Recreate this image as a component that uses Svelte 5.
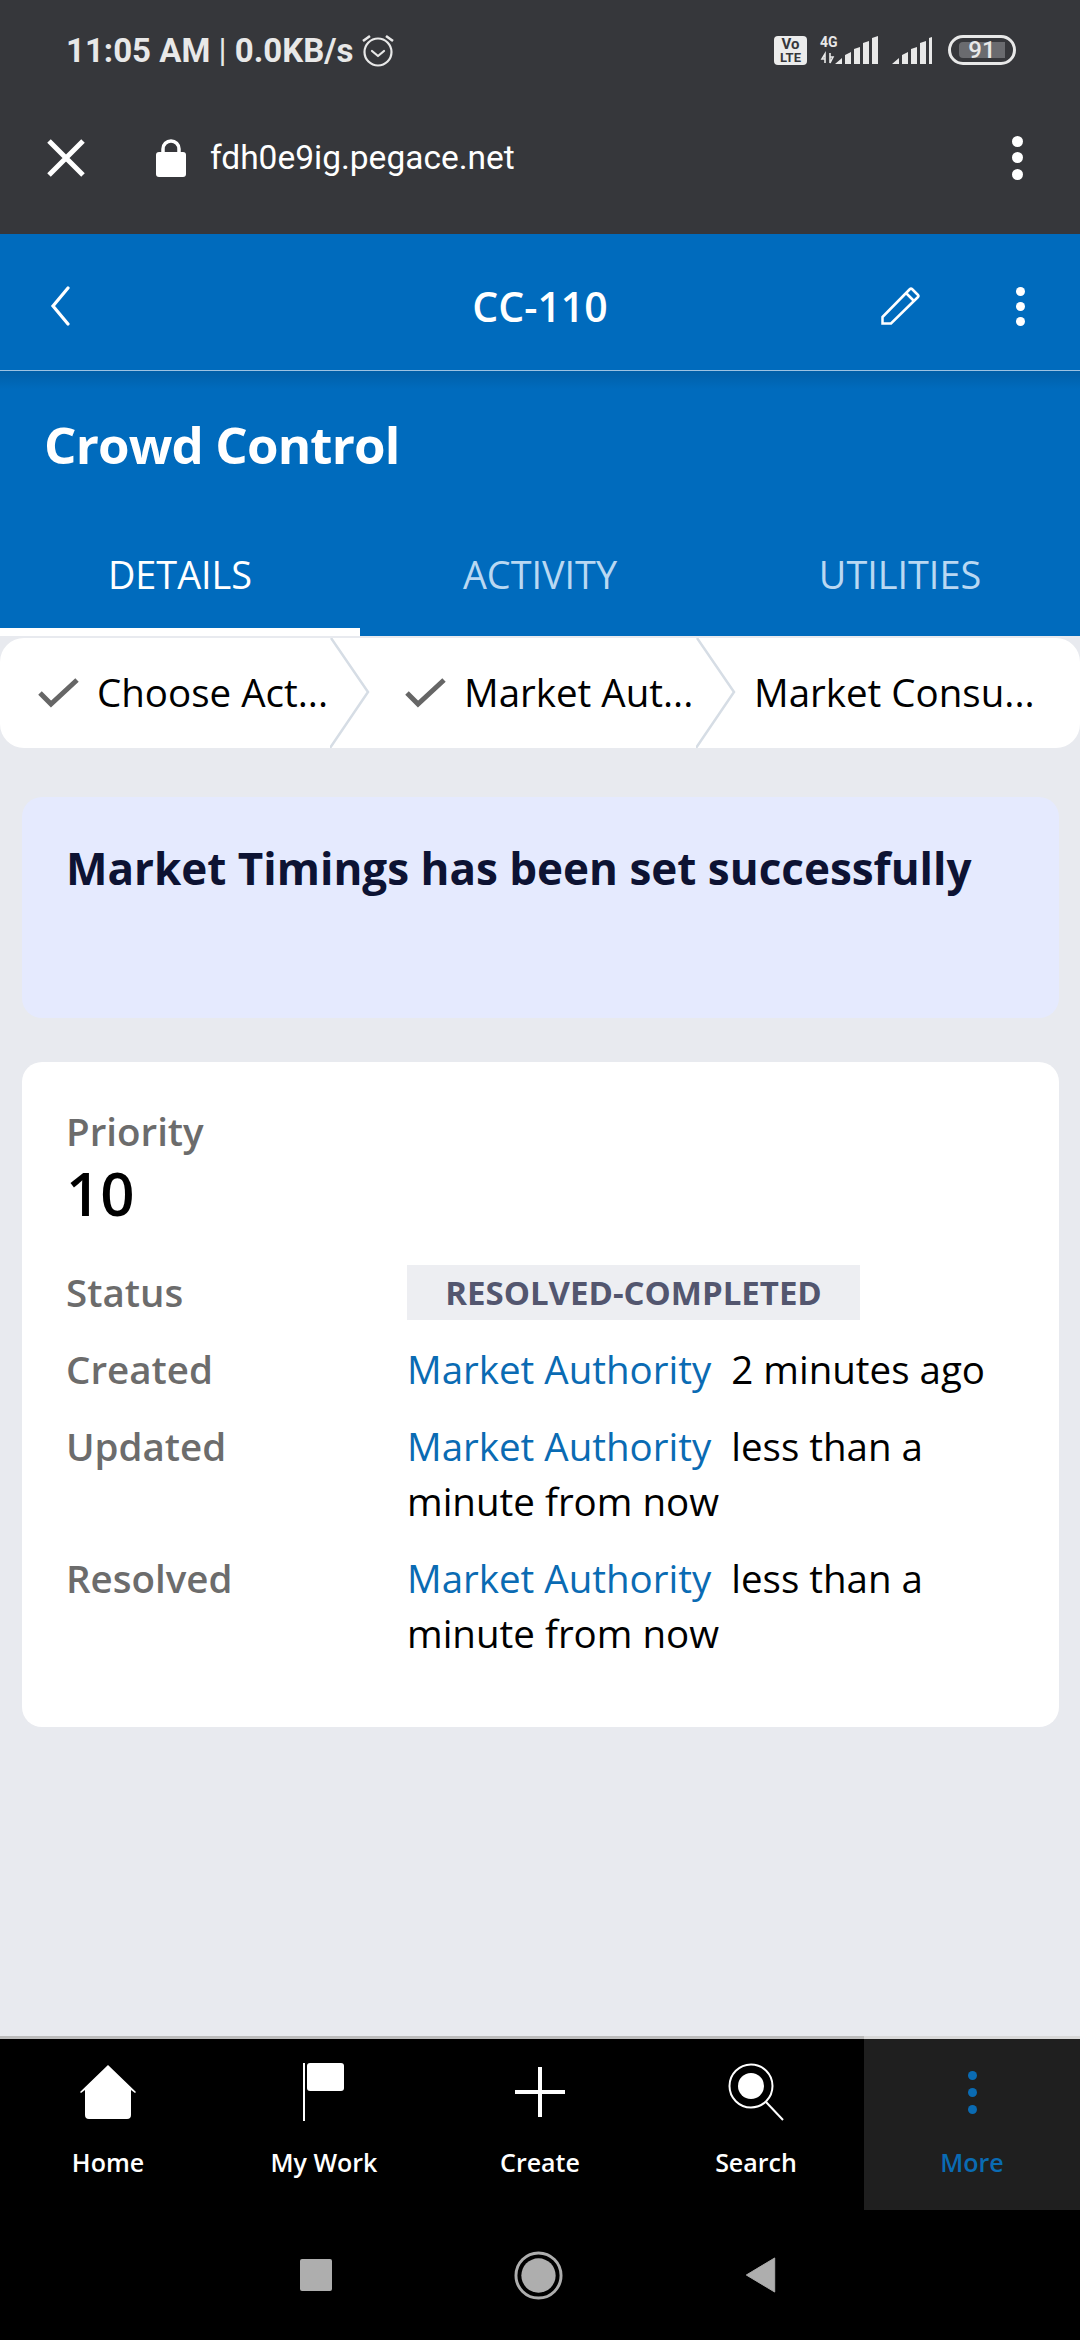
<script>
  const rows = [
    { label: 'Created', text: '2 minutes ago' },
    { label: 'Updated', text: 'less than a minute from now' },
    { label: 'Resolved', text: 'less than a minute from now' }
  ];
  const tabs = ['DETAILS', 'ACTIVITY', 'UTILITIES'];
</script>

<div class="page">
  <div class="chrome">
    <div class="status">
      <span class="time">11:05 AM <i>|</i> 0.0KB/s</span>
      <svg class="alarm" width="34" height="36" viewBox="0 0 34 36" fill="none" stroke="#e8e8e8" stroke-width="2.2"><circle cx="17" cy="20" r="13.5"/><path d="M11 19l6 5 6-5" stroke-linecap="round" stroke-linejoin="round"/><path d="M2 9l7-5M32 9l-7-5" stroke-width="2.6"/></svg>
      <span class="spacer"></span>
      <svg class="sig" width="158" height="30" viewBox="0 0 158 30">
        <rect x="0" y="1" width="33" height="29" rx="4" fill="#ececec"/>
        <text x="16.500" y="14" class="vo">Vo</text>
        <text x="16.500" y="27" class="vo lte">LTE</text>
        <text x="46" y="12" class="g4">4G</text>
        <path d="M51 28V19l-3 5h3M56 18v10l3-6h-3" fill="none" stroke="#e8e8e8" stroke-width="1.600"/>
        <path d="M64 29l7-6v6zM74 20l6-3v12h-6zM83 14l6-2v17h-6zM92 8l6-2v23h-6zM101 3l6-2v28h-6z" fill="#e8e8e8" transform="translate(-3 0)"/>
        <path d="M118 29l7-6v6zM128 20l6-3v12h-6zM137 14l6-2v17h-6zM146 8l6-2v23h-6zM155 3l3-1v27h-3z" fill="#e8e8e8"/>
      </svg>
      <div class="battery"><div class="level"></div><span>91</span></div>
    </div>
    <div class="urlbar">
      <svg width="38" height="38" viewBox="0 0 38 38" stroke="#fff" stroke-width="5"><path d="M2 2l34 34M36 2L2 36"/></svg>
      <svg class="lock" width="30" height="38" viewBox="0 0 30 38"><path d="M7 15V10a8 8 0 0 1 16 0v5" fill="none" stroke="#fff" stroke-width="3.500"/><rect y="13" width="30" height="25" rx="3" fill="#fff"/></svg>
      <span class="url">fdh0e9ig.pegace.net</span>
      <span class="spacer"></span>
      <div class="dots chrome-dots"><b></b><b></b><b></b></div>
    </div>
  </div>

  <header class="bar">
    <svg width="24" height="40" viewBox="0 0 24 40" fill="none" stroke="#fff" stroke-width="3.200" stroke-linecap="round"><path d="M20 2L5 20l15 18"/></svg>
    <h1>CC-110</h1>
    <svg class="pencil" width="39" height="38" viewBox="0 0 39 38" fill="none" stroke="#fff" stroke-width="2.500"><path d="M1.500 30L29 2q1-1 2 0l6 6q1 1 0 2L10 36.500H1.500zM25 6l8 8"/></svg>
    <div class="dots bar-dots"><b></b><b></b><b></b></div>
  </header>

  <div class="title"><h2>Crowd Control</h2></div>

  <nav class="tabs">
    {#each tabs as t, i}
      <div class="tab" class:active={i === 0}>{t}</div>
    {/each}
  </nav>

  <div class="stepper">
    <div class="step">
      <svg width="41" height="30" viewBox="0 0 41 30" fill="none" stroke="#666" stroke-width="5"><path d="M2 15l11 11L39 2"/></svg>
      <span>Choose Act...</span>
      <svg class="chev" width="40" height="110" viewBox="0 0 40 110" fill="none" stroke="#d6dde5" stroke-width="2.500"><path d="M1 0l37 54L0 110"/></svg>
    </div>
    <div class="step second">
      <svg width="41" height="30" viewBox="0 0 41 30" fill="none" stroke="#666" stroke-width="5"><path d="M2 15l11 11L39 2"/></svg>
      <span>Market Aut...</span>
      <svg class="chev" width="40" height="110" viewBox="0 0 40 110" fill="none" stroke="#d6dde5" stroke-width="2.500"><path d="M1 0l37 54L0 110"/></svg>
    </div>
    <div class="step last"><span>Market Consu...</span></div>
  </div>

  <main class="content">
    <section class="alert">Market Timings has been set successfully</section>
    <section class="card">
      <div class="plabel">Priority</div>
      <div class="pvalue">10</div>
      <div class="row status-row">
        <div class="lbl">Status</div>
        <div><span class="badge">RESOLVED-COMPLETED</span></div>
      </div>
      {#each rows as r}
        <div class="row">
          <div class="lbl">{r.label}</div>
          <div class="val"><span class="link">Market Authority</span><span class="gap"></span>{r.text}</div>
        </div>
      {/each}
    </section>
  </main>

  <nav class="bottom">
    <div class="item">
      <svg width="56" height="54" viewBox="0 0 56 54" fill="#fff"><path d="M28 0L56 27l-1 1-4-3v25q0 4-4 4H9q-4 0-4-4V25l-4 3-1-1z"/></svg>
      <span>Home</span>
    </div>
    <div class="item">
      <svg width="42" height="58" viewBox="0 0 42 58" fill="#fff"><rect x="0" y="0" width="2" height="58"/><rect x="4" y="0" width="37" height="28" rx="3"/></svg>
      <span>My Work</span>
    </div>
    <div class="item">
      <svg width="50" height="50" viewBox="0 0 50 50" fill="#fff"><rect x="0" y="23" width="50" height="4"/><rect x="23" y="0" width="4" height="50"/></svg>
      <span>Create</span>
    </div>
    <div class="item">
      <svg width="56" height="58" viewBox="0 0 56 58"><circle cx="23" cy="23" r="21.500" fill="none" stroke="#fff" stroke-width="2"/><circle cx="23" cy="23" r="13" fill="#fff"/><path d="M38 39l17 18" stroke="#fff" stroke-width="2"/></svg>
      <span>Search</span>
    </div>
    <div class="item more">
      <div class="dots more-dots"><b></b><b></b><b></b></div>
      <span>More</span>
    </div>
  </nav>

  <div class="sysnav">
    <div class="square"></div>
    <svg width="49" height="49" viewBox="0 0 50 50"><circle cx="25" cy="25" r="23" fill="none" stroke="#aeaeae" stroke-width="3"/><circle cx="25" cy="25" r="17.500" fill="#aeaeae"/></svg>
    <svg width="31" height="36" viewBox="0 0 32 38"><path d="M31 1v36L1 19z" fill="#aeaeae" stroke="#aeaeae" stroke-width="1" stroke-linejoin="round"/></svg>
  </div>
</div>

<style>
  :global(body) { margin: 0; background: #e8eaef; }
  .page { width: 1080px; height: 2340px; display: flex; flex-direction: column; overflow: hidden; font-family: "Open Sans", sans-serif; background: #e8eaef; }
  .spacer { flex: 1; }
  .chrome { background: #36373b; height: 234px; flex: none; }
  .status { height: 100px; display: flex; align-items: center; padding: 0 64px 0 66px; box-sizing: border-box; font-family: Roboto, sans-serif; color: #e8e8e8; }
  .time { font-size: 33px; font-weight: 700; white-space: nowrap; }
  .time i { font-style: normal; font-weight: 400; }
  .alarm { margin-left: 8px; }
  .vo { font: 700 15px Roboto, sans-serif; fill: #36373b; text-anchor: middle; }
  .lte { font-size: 13px; }
  .g4 { font: 700 14px Roboto, sans-serif; fill: #e8e8e8; }
  .battery { position: relative; margin-left: 16px; width: 68px; height: 30px; box-sizing: border-box; border: 3px solid #e8e8e8; border-radius: 15px; display: flex; align-items: center; justify-content: center; }
  .level { position: absolute; left: 8px; top: 4px; bottom: 4px; width: 46px; background: #6a6b6f; border-radius: 4px 0 0 4px; }
  .battery span { position: relative; font: 500 24px Roboto, sans-serif; color: #e8e8e8; }
  .urlbar { height: 134px; display: flex; align-items: center; padding: 0 57px 19px 47px; box-sizing: border-box; color: #fff; }
  .lock { margin-left: 71px; }
  .url { margin-left: 24px; font: 400 33.500px/40px Roboto, sans-serif; }
  .dots { display: flex; flex-direction: column; align-items: center; }
  .dots b { display: block; border-radius: 50%; }
  .chrome-dots { gap: 5.500px; }
  .chrome-dots b { width: 11px; height: 11px; background: #fff; }
  .bar { height: 137px; flex: none; background: #006bbd; border-bottom: 1px solid #9cc3e3; box-sizing: border-box; display: flex; align-items: center; padding: 8px 55px 0 48px; color: #fff; position: relative; }
  .bar h1 { position: absolute; left: 0; right: 0; margin: 0; text-align: center; font-size: 41px; font-weight: 600; }
  .pencil { margin-left: auto; margin-right: 96px; }
  .bar-dots { gap: 6px; }
  .bar-dots b { width: 9px; height: 9px; background: #fff; }
  .title { height: 170px; flex: none; background: linear-gradient(#005fa8, #006bbd 18px); display: flex; padding: 41px 44px 0; box-sizing: border-box; }
  .title h2 { margin: 0; color: #fff; font-size: 51px; line-height: 64px; font-weight: 700; letter-spacing: -0.85px; }
  .tabs { height: 95px; flex: none; display: grid; grid-template-columns: repeat(3, 1fr); background: #006bbd; }
  .tab { text-align: center; color: #b9d8f2; font-size: 37.800px; line-height: 50px; padding-top: 9px; box-sizing: border-box; }
  .tab.active { color: #fff; border-bottom: 8px solid #fff; height: 95px; }
  .stepper { margin-top: 2px; height: 110px; flex: none; background: #fff; border-radius: 24px; display: flex; align-items: center; color: #000; font-size: 38.500px; overflow: hidden; }
  .step { position: relative; height: 100%; width: 370px; display: flex; align-items: center; box-sizing: border-box; padding-left: 38px; gap: 19px; flex: none; white-space: nowrap; }
  .step span { position: relative; top: -1px; left: -1px; }
  .step.second { width: 366px; padding-left: 35px; }
  .step.last { flex: 1; width: auto; padding-left: 19px; }
  .chev { position: absolute; right: 0; top: 0; }
  .content { flex: 1; min-height: 0; padding: 49px 21px 0 22px; display: flex; flex-direction: column; gap: 44px; }
  .alert { background: #e5eafe; height: 221px; border-radius: 20px; box-sizing: border-box; padding: 42px 44px; font-size: 44px; line-height: 58px; font-weight: 700; color: #0d1333; }
  .card { background: #fff; border-radius: 20px; height: 665px; box-sizing: border-box; padding: 44px 44px; }
  .plabel { font-size: 38.500px; line-height: 50px; color: #6c6c6c; font-weight: 600; }
  .pvalue { font-size: 60px; line-height: 70px; color: #000; font-weight: 600; margin-top: 2px; }
  .row { display: grid; grid-template-columns: 341px 1fr; font-size: 38.500px; line-height: 55px; margin-bottom: 22px; color: #000; }
  .status-row { margin-top: 37px; }
  .lbl { color: #6c6c6c; font-weight: 600; }
  .val { max-width: 600px; }
  .link { color: #0a6bb3; }
  .gap { display: inline-block; width: 20px; }
  .badge { display: block; width: 453px; height: 55px; background: #edeef2; color: #53566f; font-size: 33px; font-weight: 700; line-height: 55px; text-align: center; }
  .bottom { height: 174px; flex: none; display: grid; grid-template-columns: repeat(5, 1fr); background: #000; border-top: 3px solid #bcbcbc; box-sizing: border-box; }
  .item { display: flex; flex-direction: column; align-items: center; color: #fff; font-size: 25px; font-weight: 600; }
  .item svg, .more-dots { height: 58px; margin-top: 24px; flex: none; }
  .item span { margin-top: 24px; line-height: 34px; }
  .more { background: #1f1f1f; color: #0a6bb3; margin-top: -3px; border-top: 3px solid #d8d8d8; }
  .more-dots { gap: 8px; justify-content: center; }
  .more-dots b { width: 9px; height: 9px; background: #0a6bb3; }
  .sysnav { height: 130px; flex: none; background: #000; display: flex; align-items: center; justify-content: center; gap: 182px; padding-right: 4px; box-sizing: border-box; }
  .square { width: 32px; height: 32px; background: #aeaeae; border-radius: 2px; }
</style>
